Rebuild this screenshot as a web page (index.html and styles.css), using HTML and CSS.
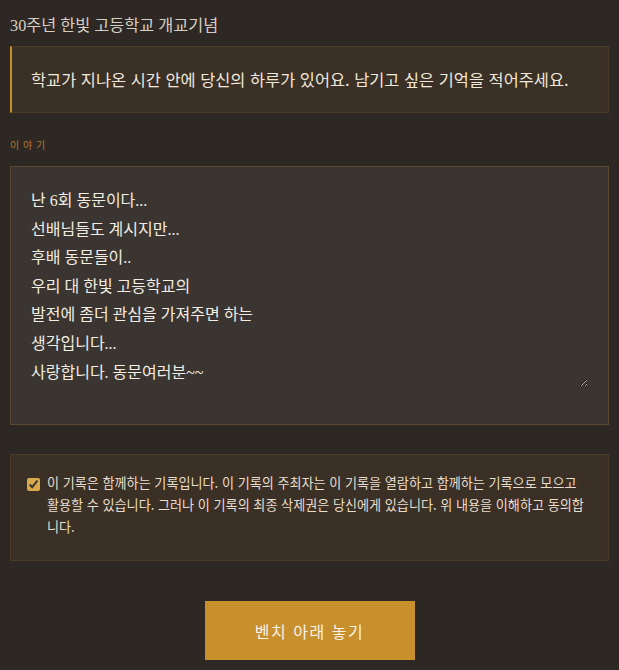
FILE: index.html
```html
<!DOCTYPE html>
<html lang="ko">
<head>
<meta charset="utf-8">
<link rel="stylesheet" href="styles.css">
</head>
<body>
<main class="page">
  <h1 class="title">30주년 한빛 고등학교 개교기념</h1>
  <div class="quote">학교가 지나온 시간 안에 당신의 하루가 있어요. 남기고 싶은 기억을 적어주세요.</div>
  <div class="label">이 야 기</div>
  <div class="story">
    <textarea class="story-input" rows="7">난 6회 동문이다...
선배님들도 계시지만...
후배 동문들이..
우리 대 한빛 고등학교의
발전에 좀더 관심을 가져주면 하는
생각입니다...
사랑합니다. 동문여러분~~</textarea>
  </div>
  <label class="consent">
    <input type="checkbox" class="consent-check" checked>
    <span class="consent-text">이 기록은 함께하는 기록입니다. 이 기록의 주최자는 이 기록을 열람하고 함께하는 기록으로 모으고 활용할 수 있습니다. 그러나 이 기록의 최종 삭제권은 당신에게 있습니다. 위 내용을 이해하고 동의합니다.</span>
  </label>
  <div class="actions">
    <button class="submit" type="button">벤치 아래 놓기</button>
  </div>
</main>
</body>
</html>
```

FILE: styles.css
```css
html, body {
  margin: 0;
  padding: 0;
  background: #2e2824;
}
body {
  font-family: "Noto Sans CJK KR", "Noto Sans", sans-serif;
  color: #ece4d8;
}
.page {
  padding: 14px 10px 10px;
  display: flex;
  flex-direction: column;
}
.title {
  margin: 0 0 8px;
  font-family: "Liberation Serif", "Noto Sans CJK KR", serif;
  font-weight: 400;
  font-size: 16.3px;
  line-height: 24px;
  color: #d6cec2;
}
.quote {
  background: #3b3025;
  border: 1px solid #4a3b27;
  border-left: 2px solid #c8922a;
  padding: 20px 19px;
  font-size: 16.4px;
  line-height: 25px;
  color: #f0e8dc;
}
.label {
  margin-top: 24px;
  font-size: 10px;
  line-height: 16px;
  color: #b07a30;
  letter-spacing: 0.5px;
}
.story {
  margin-top: 13px;
  background: #3a3531;
  border: 1px solid #5a4830;
  padding: 20px 20px 37px;
}
.story-input {
  display: block;
  box-sizing: border-box;
  width: 100%;
  margin: 0;
  padding: 0;
  border: 0;
  outline: none;
  background: transparent;
  color: #f3ede3;
  font-family: "Liberation Serif", "Noto Sans CJK KR", serif;
  font-size: 16px;
  line-height: 28.6px;
  resize: vertical;
}
.consent {
  margin-top: 29px;
  background: #3b3025;
  border: 1px solid #4a3b27;
  padding: 17px 16px 22px;
  display: flex;
  gap: 7px;
  align-items: flex-start;
}
.consent-check {
  margin: 6px 0 0;
  width: 13px;
  height: 13px;
  flex: none;
  accent-color: #dba84a;
}
.consent-text {
  font-size: 13.1px;
  line-height: 22px;
  color: #e9dece;
}
.actions {
  margin-top: 40px;
  display: flex;
  justify-content: center;
}
.submit {
  width: 210px;
  height: 59px;
  border: 0;
  background: #c8902c;
  color: #f8f2e8;
  font-family: "Noto Sans CJK KR", sans-serif;
  font-size: 16px;
  letter-spacing: 1.5px;
  cursor: pointer;
}
```
